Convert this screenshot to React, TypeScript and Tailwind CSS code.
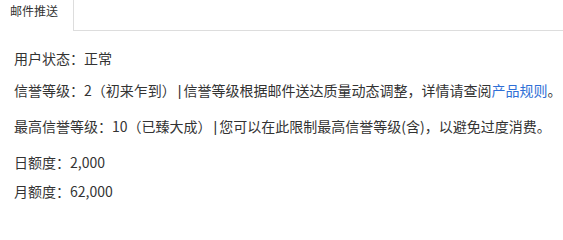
import React from 'react';

const Bar: React.FC = () => <span className="font-['Liberation_Sans',sans-serif] px-[2px]">|</span>;

const App: React.FC = () => {
  return (
    <div className="w-[563px] h-[208px] bg-white overflow-hidden text-[#333] font-['Noto_Sans_CJK_SC',sans-serif]">
      <div className="flex h-[31px]">
        <div className="w-[74px] border-r border-[#ddd] pl-[10px] pt-[2px] text-[12px] leading-[18px]">邮件推送</div>
        <div className="flex-1 border-b border-[#ddd]" />
      </div>

      <div className="pl-[14px] pt-[17px] text-[14px] leading-[20px] whitespace-nowrap">
        <div>用户状态：正常</div>
        <div className="mt-[12px]">
          信誉等级：2（初来乍到）<Bar />信誉等级根据邮件送达质量动态调整，详情请查阅<span className="text-[#2f6fd6]">产品规则</span>。
        </div>
        <div className="mt-[15px]">
          最高信誉等级：10（已臻大成）<Bar />您可以在此限制最高信誉等级(含)，以避免过度消费。
        </div>
        <div className="mt-[15px]">日额度：2,000</div>
        <div className="mt-[9px]">月额度：62,000</div>
      </div>
    </div>
  );
};

export default App;
